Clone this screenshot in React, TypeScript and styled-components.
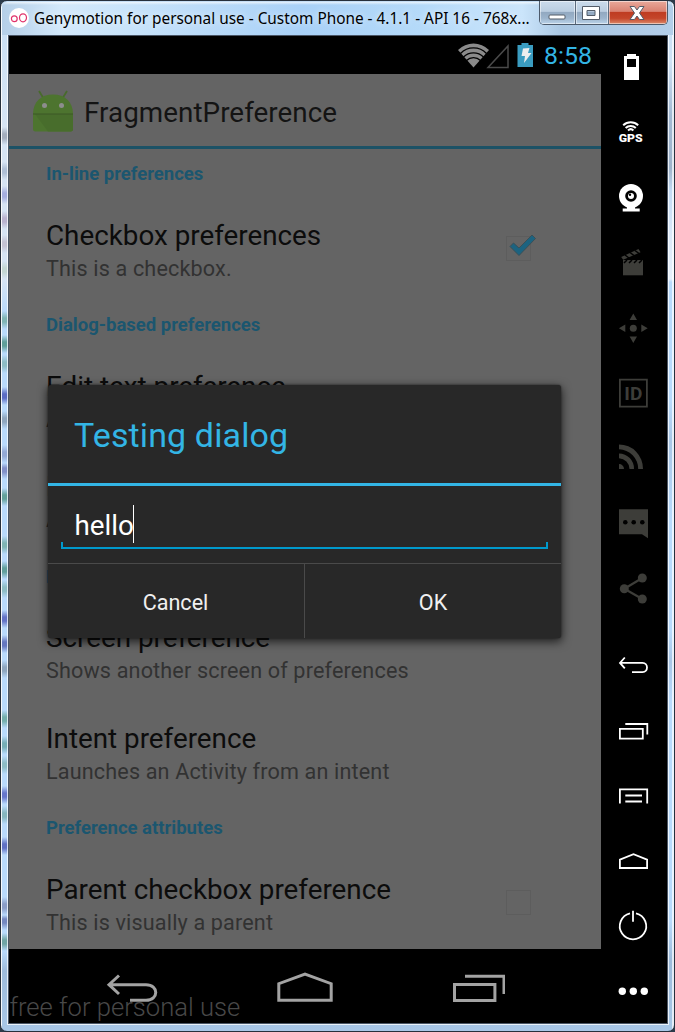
import React from "react";
import styled, { createGlobalStyle } from "styled-components";

const Global = createGlobalStyle`
  * { box-sizing: border-box; }
  html, body { margin: 0; padding: 0; background: #2b3a4a; }
  body { width: 675px; height: 1032px; overflow: hidden; font-family: Roboto, "Open Sans", sans-serif; }
`;

/* Soft colour spots that shine through the left glass edge: [y, colour] */
const spots: [number, string][] = [
  [135, "#a3adbd"], [170, "#aebfd6"], [194, "#a5aee0"], [219, "#b9b3cf"], [243, "#c4c3d4"], [269, "#c3d6d3"],
  [319, "#80b5b6"], [343, "#5f9f9a"], [363, "#8dbcc5"], [395, "#5b6cc4"], [419, "#8ea6bf"], [453, "#93a9d6"],
  [469, "#8190c8"], [496, "#63a19b"], [544, "#7fb4b4"], [569, "#619f9c"], [588, "#8dbcc5"], [618, "#6373c6"],
  [643, "#6577c0"], [668, "#8ea6bf"], [718, "#74aeac"], [744, "#76aeb6"], [764, "#8dbcc5"], [794, "#6676cb"],
  [814, "#86b6bf"], [845, "#5f70c4"], [905, "#8a9dc8"], [920, "#7488c0"], [941, "#6fa5a5"],
];
const edgeBase = (y: number) => (y < 281 ? "#d6e4f4" : "#b9dafc");
const edgeStops = spots
  .map(([y, c]) => `${edgeBase(y)} ${y - 9}px, ${c} ${y - 2}px, ${c} ${y + 2}px, ${edgeBase(y)} ${y + 9}px`)
  .join(", ");

const Window = styled.div`
  width: 675px;
  height: 1032px;
  display: flex;
  flex-direction: column;
  padding: 1px;
  border-radius: 7px;
  border: 1px solid #26303c;
  background:
    linear-gradient(90deg, rgba(255,255,255,0.9) 0 1px, transparent 1px 671px, rgba(255,255,255,0.7) 671px),
    linear-gradient(180deg, #c5def5 0, #cfe2f5 60px, ${edgeStops}, #9dbbdb 970px, #a8c7e7 100%) 0 0 / 7px 100% no-repeat,
    linear-gradient(180deg, #c5def5 0, #cfe2f5 60px, #a3b9d3 115px, #9fb3cb 167px, #c3daf4 190px, #dbe8f8 235px, #e6effb 278px, #b9dafc 281px, #b9dafc 400px, #a9c6e6 440px, #b9dafc 520px, #b9dafc 630px, #a9c6e6 660px, #b9dafc 700px, #b9dafc 920px, #9dbbdb 960px, #a8c7e7 100%);
`;

const TitleBar = styled.header`
  position: relative;
  height: 33px;
  display: flex;
  align-items: center;
  padding: 0 0 1px 7px;
  border-radius: 6px 6px 0 0;
  background:
    linear-gradient(180deg, rgba(255,255,255,0.7) 0, rgba(255,255,255,0) 3px),
    linear-gradient(90deg, #b5cfe8 0, #d3e9fb 60px, #c6e2fa 140px, #a9d1f7 300px, #b5daf9 420px, #cbe5fb 520px, #aac7e3 560px, #b3cee9 100%);
`;

const Logo = styled.svg`
  width: 20px;
  height: 20px;
  flex: none;
`;

const Title = styled.div`
  margin-left: 5px;
  font-family: "Noto Sans", "Open Sans", sans-serif;
  font-size: 15.37px;
  color: #000;
  white-space: nowrap;
  text-shadow: 0 0 6px rgba(255,255,255,0.8);
`;

const Controls = styled.div`
  position: absolute;
  right: 5px;
  top: -1px;
  height: 24px;
  display: flex;
  border: 1px solid #4c5a6b;
  border-top: 0;
  border-radius: 0 0 5px 5px;
  overflow: hidden;
`;

const Control = styled.div<{ $w: number; $close?: boolean }>`
  width: ${(p) => p.$w}px;
  display: flex;
  align-items: center;
  justify-content: center;
  box-shadow: inset 0 0 0 1px rgba(255,255,255,0.5);
  & + & { border-left: 1px solid #5b6b7e; }
  background: ${(p) =>
    p.$close
      ? "linear-gradient(180deg,#e9a99b 0,#d98272 45%,#bf3c22 50%,#c4452a 75%,#dc8a6a 100%)"
      : "linear-gradient(180deg,#cbdcec 0,#bacde0 45%,#92a9c1 50%,#9cb4cc 75%,#bcd4ea 100%)"};
`;

const Glyph = styled.svg`
  width: 20px;
  height: 18px;
  margin-right: 2px;
  fill: #fff;
  stroke: #535c68;
`;

const Client = styled.main`
  display: flex;
  margin: 1px 6px 0 7px;
  height: 987px;
  width: 658px;
  background: #000;
  box-shadow: 0 0 0 1px #4a5666, 0 0 0 2px rgba(255,255,255,0.75);
`;

const Phone = styled.section`
  position: relative;
  width: 592px;
  display: flex;
  flex-direction: column;
`;

const StatusBar = styled.div`
  height: 38px;
  display: flex;
  justify-content: flex-end;
  align-items: center;
  padding: 1px 9px 0 0;
  font-size: 24.8px;
  color: #33b5e5;
`;

const StatusIcons = styled.svg`
  width: 80px;
  height: 30px;
  margin: 0 9px 1px 0;
`;

const Clock = styled.span`
  width: 48px;
`;

const ActionBar = styled.div`
  height: 75px;
  flex: none;
  display: flex;
  align-items: center;
  padding-left: 23px;
  border-bottom: 3px solid #1c5266;
  background: #646464;
`;

const AppIcon = styled.svg`
  width: 44px;
  height: 44px;
`;

const AppTitle = styled.h1`
  margin: 5px 0 0 8px;
  font-size: 27.8px;
  letter-spacing: 0.05px;
  font-weight: 400;
  color: #141414;
`;

const List = styled.div`
  height: 800px;
  overflow: hidden;
  background: #646464;
  padding-left: 37px;
`;

const Category = styled.div`
  height: 50.6px;
  line-height: 50px;
  font-size: 18.5px;
  font-weight: 700;
  color: #1b566f;
`;

const Row = styled.div`
  height: 100.5px;
  display: flex;
  justify-content: space-between;
  padding: 19px 61px 0 0;
`;

const RowTitle = styled.div`
  font-size: 27.8px;
  line-height: 34px;
  color: #0c0c0c;
  white-space: nowrap;
`;

const RowSummary = styled.div`
  font-size: 21.6px;
  line-height: 32px;
  letter-spacing: 0.15px;
  color: #323232;
  white-space: nowrap;
`;

const Check = styled.svg`
  width: 44px;
  height: 44px;
  margin-top: 4px;
`;

const Dialog = styled.div`
  position: absolute;
  left: 39px;
  top: 349px;
  width: 513px;
  height: 253px;
  display: flex;
  flex-direction: column;
  background: #282828;
  border-radius: 3px;
  box-shadow: 0 3px 10px 1px rgba(0,0,0,0.65), 0 0 2px rgba(0,0,0,0.6);
`;

const DialogTitle = styled.h2`
  margin: 0;
  height: 101px;
  padding-left: 26px;
  line-height: 101px;
  font-size: 34px;
  letter-spacing: 0.12px;
  font-weight: 400;
  color: #33b5e5;
  border-bottom: 3px solid #33b5e5;
`;

const DialogBody = styled.div`
  height: 77px;
  padding: 17px 13px 0;
`;

const Field = styled.div`
  position: relative;
  height: 46px;
  padding-left: 13.5px;
  display: flex;
  font-size: 27.8px;
  line-height: 46px;
  color: #fff;
  border-bottom: 2px solid #0099cc;
  &::before, &::after {
    content: "";
    position: absolute;
    bottom: 0;
    width: 2px;
    height: 5px;
    background: #0099cc;
  }
  &::before { left: 0; }
  &::after { right: 0; }
`;

const Caret = styled.span`
  width: 1px;
  height: 38px;
  margin: 2px 0 0 -1px;
  background: #fff;
`;

const DialogButtons = styled.div`
  flex: 1;
  display: grid;
  grid-template-columns: 256px 1fr;
  border-top: 1px solid #4a4a4a;
`;

const DialogButton = styled.div`
  display: flex;
  align-items: center;
  justify-content: center;
  font-size: 21.6px;
  padding: 2px 1px 0 0;
  color: #f0f0f0;
  & + & {
    padding-right: 0;
    border-left: 1px solid #4a4a4a;
  }
`;

const NavBar = styled.div`
  position: relative;
  flex: 1;
  display: flex;
  align-items: flex-start;
  gap: 110px;
  padding: 19px 0 0 96px;
`;

const NavIcon = styled.svg`
  width: 60px;
  height: 40px;
  flex: none;
  fill: none;
  stroke: #a3a3a3;
  stroke-width: 3;
`;

const Watermark = styled.div`
  position: absolute;
  left: 0.5px;
  bottom: 1px;
  font-size: 25.6px;
  line-height: 30px;
  font-weight: 300;
  color: #484848;
  white-space: nowrap;
`;

const Tools = styled.aside`
  width: 66px;
  display: flex;
  flex-direction: column;
  align-items: center;
  gap: 21.3px;
  padding-top: 9px;
`;

const Tool = styled.svg<{ $dim?: boolean; $line?: boolean; $gap?: boolean }>`
  width: 44px;
  height: 44px;
  flex: none;
  margin-top: ${(p) => (p.$gap ? 10.6 : 0)}px;
  color: ${(p) => (p.$dim ? "#3d3d39" : "#fff")};
  fill: ${(p) => (p.$line ? "none" : "currentColor")};
  stroke: ${(p) => (p.$line ? "currentColor" : "none")};
  stroke-width: 1.8;
`;

function Toolbar() {
  return (
    <Tools>
      <Tool><path fillRule="evenodd" d="M15 9h9v2h3v24H12V11h3zM15 14v8h9v-8z" /></Tool>
      <Tool>
        <g fill="none" stroke="#fff" strokeWidth="2">
          <path d="M11.2 15.3a11 11 0 0 1 15 0M13.6 18a7.4 7.4 0 0 1 10.2 0M16 20.4a4 4 0 0 1 5.4 0" />
        </g>
        <text x="6.7" y="31.8" fontSize="10.5" fontWeight="900" fontFamily="Roboto" textLength="24" lengthAdjust="spacingAndGlyphs">GPS</text>
      </Tool>
      <Tool>
        <circle cx="19" cy="20" r="12" />
        <path d="M15 31h8v1.5h4.7v3H10.7v-3H15z" />
        <circle cx="19" cy="20" r="5.8" fill="#000" />
        <circle cx="19" cy="20" r="3" />
        <circle cx="18" cy="18.8" r="1.2" fill="#000" />
      </Tool>
      <Tool $dim>
        <path d="M11 19h20v15.3H11z" />
        <path d="M9.2 16 26.5 8l2 3.2-17.3 7.6z" />
        <path d="m12 22 3-3m2 3 3-3m2 3 3-3m2 3 3-3M13 14l4 3m1-5.5 4 3m1-5 4 3" stroke="#000" strokeWidth="1.5" />
      </Tool>
      <Tool $dim>
        <circle cx="21.3" cy="22.3" r="3.5" />
        <path d="m21.3 7.6 3.7 6.4h-7.4zM21.3 37l3.7-6.4h-7.4zM6.9 22.3l6.4-3.7V26zM35.7 22.3l-6.4-3.7V26z" />
      </Tool>
      <Tool $dim>
        <path fill="none" stroke="currentColor" d="M7.9 8.7h27v27h-27z" />
        <text x="12.3" y="28.8" fontSize="18.5" fontWeight="700" fontFamily="Roboto" textLength="18" lengthAdjust="spacingAndGlyphs">ID</text>
      </Tool>
      <Tool $dim>
        <path d="M7 27a5 5 0 0 1 5 5H7zM7 16.5A15 15 0 0 1 22 32h-4.5A10.8 10.8 0 0 0 7 21.2zM7 7.5A24 24 0 0 1 31 32h-4.8A19.5 19.5 0 0 0 7 12.3z" />
      </Tool>
      <Tool $dim>
        <path d="M7 7.3h29v29l-6-4H7z" />
        <g fill="#000"><circle cx="13.3" cy="20.3" r="2.3" /><circle cx="21.7" cy="20.3" r="2.3" /><circle cx="30.3" cy="20.3" r="2.3" /></g>
      </Tool>
      <Tool $dim>
        <path d="M30.3 11 12.3 21.7l18 10.3" fill="none" stroke="currentColor" strokeWidth="2.2" />
        <circle cx="30.3" cy="11" r="4.5" /><circle cx="12.3" cy="21.7" r="4.5" /><circle cx="30.3" cy="32" r="4.5" />
      </Tool>
      <Tool $line $gap><path d="M12.8 14.5 8 19.9l4.8 5.4M8 19.9h22.5c6 0 6 9.2 0 9.2H20" /></Tool>
      <Tool $line><path d="M7.9 19.8h22.9v9.8H7.9zM13.3 15h22v10.5" /></Tool>
      <Tool $line><path d="M7.9 29.5V15.3h27.3v14.2M13.3 21.5H30M13.3 27.5H30" /></Tool>
      <Tool $line><path d="M7.9 29V20.7l13.6-5.5 13.6 5.5V29z" /></Tool>
      <Tool $line><path d="M18 9.3a13.2 13.2 0 1 0 6 0M21 6.8v11" /></Tool>
      <Tool><circle cx="10.3" cy="21.2" r="3.7" /><circle cx="21.3" cy="21.2" r="3.7" /><circle cx="32.3" cy="21.2" r="3.7" /></Tool>
    </Tools>
  );
}

function CheckBox({ on }: { on?: boolean }) {
  return (
    <Check viewBox="0 0 44 44">
      <rect x="10.5" y="13.5" width="24" height="24" fill="none" stroke="#5d5d5d" />
      {on && <path d="m14 23.5 3.5-3.5 5.5 5L36 12l3.5 3.5L23 32.5z" fill="#1c6380" stroke="#3a5058" strokeWidth="1" />}
    </Check>
  );
}

function Preference({ title, summary, box, on }: { title: string; summary: string; box?: boolean; on?: boolean }) {
  return (
    <Row>
      <div>
        <RowTitle>{title}</RowTitle>
        <RowSummary>{summary}</RowSummary>
      </div>
      {box && <CheckBox on={on} />}
    </Row>
  );
}

export default function App() {
  return (
    <>
      <Global />
      <Window>
        <TitleBar>
          <Logo viewBox="0 0 20 20">
            <circle cx="10" cy="10" r="10" fill="#fff" />
            <g fill="none" stroke="#e0336b" strokeWidth="1.2"><circle cx="5.3" cy="10.8" r="2.9" /><ellipse cx="14" cy="9.8" rx="3.5" ry="4" /></g>
          </Logo>
          <Title>Genymotion for personal use - Custom Phone - 4.1.1 - API 16 - 768x...</Title>
          <Controls>
            <Control $w={35}><Glyph viewBox="0 0 20 18"><rect x="2" y="11" width="16" height="4" rx="1" /></Glyph></Control>
            <Control $w={33}><Glyph viewBox="0 0 20 18"><path fillRule="evenodd" d="M1.5 2.5h17v13h-17zM6 6.5v5h8v-5z" /></Glyph></Control>
            <Control $w={59} $close><Glyph viewBox="0 0 20 18"><path d="M3 2.5h4.5L10 6l2.5-3.5H17L12.5 9l4.5 6.5h-4.5L10 12l-2.5 3.5H3L7.5 9z" /></Glyph></Control>
          </Controls>
        </TitleBar>
        <Client>
          <Phone>
            <StatusBar>
              <StatusIcons viewBox="0 0 80 30">
                <path d="M3 10a22 22 0 0 1 31 0L18.5 27.5z" fill="#8a8a8a" />
                <path d="M5.5 13.5a18 18 0 0 1 26 0M8.5 17a14 14 0 0 1 20 0M11.5 20.5a10 10 0 0 1 14 0" fill="none" stroke="#000" strokeWidth="1.3" />
                <path d="M33 27.5h20V6z" fill="none" stroke="#4a4a4a" strokeWidth="1.5" />
                <path d="M62.5 5h4V3h7v2h4.5v22H62.5z" fill="#3a9cc0" />
                <path d="m68 8.5 6.5-.5-1.5 5h3.5L69 23l1-7h-3.5z" fill="#eee" />
              </StatusIcons>
              <Clock>8:58</Clock>
            </StatusBar>
            <ActionBar>
              <AppIcon viewBox="0 0 44 44">
                <path d="m7 3 4 6.5M35 3l-4 6.5" stroke="#486b2c" strokeWidth="1.8" />
                <path d="M1 26C1 14 9 6.5 21 6.5S41 14 41 26v15q0 2.5-2.5 2.5H3.5Q1 43.5 1 41z" fill="#4d742f" />
                <path d="M1 26h40v15q0 2.5-2.5 2.5H16L3 26z" fill="#486d2c" />
                <path d="M1 26h40" stroke="#3d5926" />
                <circle cx="12.5" cy="17.5" r="2.5" fill="#8d8d8d" /><circle cx="29.5" cy="17.5" r="2.5" fill="#8d8d8d" />
              </AppIcon>
              <AppTitle>FragmentPreference</AppTitle>
            </ActionBar>
            <List>
              <Category>In-line preferences</Category>
              <Preference title="Checkbox preferences" summary="This is a checkbox." box on />
              <Category>Dialog-based preferences</Category>
              <Preference title="Edit text preference" summary="An example that uses an edit text dialog" />
              <Preference title="List preference" summary="An example that uses a list dialog" />
              <Category>Launch preferences</Category>
              <Preference title="Screen preference" summary="Shows another screen of preferences" />
              <Preference title="Intent preference" summary="Launches an Activity from an intent" />
              <Category>Preference attributes</Category>
              <Preference title="Parent checkbox preference" summary="This is visually a parent" box />
            </List>
            <NavBar>
              <NavIcon><path d="M14 7.5 4 16.7l10 9.3M4 16.7h37c13 0 13 15.6 0 15.6H25" /></NavIcon>
              <NavIcon><path d="M3.8 32.2V15.7L30 6l26.2 9.7v16.5z" /></NavIcon>
              <NavIcon><path d="M9.5 16.5h40.4v16H9.5zM20 8.2h39V26" /></NavIcon>
              <Watermark>free for personal use</Watermark>
            </NavBar>
            <Dialog>
              <DialogTitle>Testing dialog</DialogTitle>
              <DialogBody><Field>hello<Caret /></Field></DialogBody>
              <DialogButtons>
                <DialogButton>Cancel</DialogButton>
                <DialogButton>OK</DialogButton>
              </DialogButtons>
            </Dialog>
          </Phone>
          <Toolbar />
        </Client>
      </Window>
    </>
  );
}
